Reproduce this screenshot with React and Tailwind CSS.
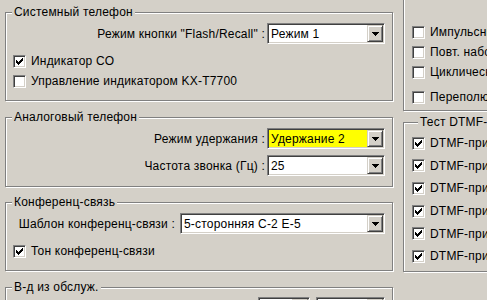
import React from 'react'

const font = { fontFamily: '"Liberation Sans", Arial, sans-serif' }

const Sunken = 'border border-t-[#808080] border-l-[#808080] border-b-white border-r-white shadow-[inset_1px_1px_0_#404040,inset_-1px_-1px_0_#d4d0c8]'

const Check = ({ checked, label }) => (
  <div className="flex items-center gap-[5px] h-full whitespace-nowrap">
    <div className={`w-[13px] h-[13px] shrink-0 bg-white ${Sunken} flex items-center justify-center`}>
      {checked && (
        <svg width="7" height="7" viewBox="0 0 7 7" shapeRendering="crispEdges">
          <path d="M6 0h1v3h-1zM5 1h1v3h-1zM4 2h1v3h-1zM3 3h1v3h-1zM2 4h1v3h-1zM1 3h1v3h-1zM0 2h1v3h-1z" fill="#000" />
        </svg>
      )}
    </div>
    <span>{label}</span>
  </div>
)

const Combo = ({ value, width, highlight }) => (
  <div className={`h-[21px] shrink-0 flex bg-white ${Sunken} p-[1px]`} style={{ width }}>
    <div className={`flex-1 flex items-center pl-[2px] overflow-hidden whitespace-nowrap ${highlight ? 'bg-[#ffff00]' : ''}`}>
      {value}
    </div>
    <div className="w-[16px] h-[17px] bg-[#d4d0c8] border border-t-[#d4d0c8] border-l-[#d4d0c8] border-b-[#404040] border-r-[#404040] shadow-[inset_1px_1px_0_#fff,inset_-1px_-1px_0_#808080] flex items-center justify-center">
      <svg width="7" height="4" viewBox="0 0 7 4" shapeRendering="crispEdges">
        <path d="M0 0h7v1h-7zM1 1h5v1h-5zM2 2h3v1h-3zM3 3h1v1h-1z" fill="#000" />
      </svg>
    </div>
  </div>
)

const Group = ({ title, className = '', children }) => (
  <div className={`shrink-0 flex flex-col border border-[#808080] shadow-[inset_1px_1px_0_#fff,1px_1px_0_#fff] ${className}`}>
    <div className="-mt-[8px] ml-[6px] px-[2px] self-start bg-[#d4d0c8] leading-[14px] h-[14px] whitespace-nowrap">
      {title}
    </div>
    {children}
  </div>
)

const LabelRow = ({ label, className = '', children }) => (
  <div className={`flex items-center justify-end gap-[2px] pr-[7px] h-[21px] whitespace-nowrap ${className}`}>
    <span>{label}</span>
    {children}
  </div>
)

export default function App() {
  return (
    <div className="w-[487px] h-[300px] overflow-hidden bg-[#d4d0c8] text-[12px] tracking-[0.2px] text-black flex gap-[10px] pl-[5px]" style={font}>
      <div className="w-[388px] shrink-0 flex flex-col pt-[12px]">
        <Group title="Системный телефон" className="h-[89px]">
          <LabelRow label={'Режим кнопки "Flash/Recall" :'} className="mt-[4px]">
            <Combo value="Режим 1" width={118} />
          </LabelRow>
          <div className="pl-[7px] h-[20px] mt-[7px]">
            <Check checked label="Индикатор CO" />
          </div>
          <div className="pl-[7px] h-[20px]">
            <Check label="Управление индикатором KX-T7700" />
          </div>
        </Group>

        <Group title="Аналоговый телефон" className="h-[70px] mt-[16px]">
          <LabelRow label="Режим удержания :" className="mt-[4px]">
            <Combo value="Удержание 2" width={118} highlight />
          </LabelRow>
          <LabelRow label="Частота звонка (Гц) :" className="mt-[6px]">
            <Combo value="25" width={118} />
          </LabelRow>
        </Group>

        <Group title="Конференц-связь" className="h-[69px] mt-[15px]">
          <div className="flex items-center justify-end gap-[5px] pr-[7px] h-[21px] mt-[4px] whitespace-nowrap">
            <span>Шаблон конференц-связи :</span>
            <Combo value="5-сторонняя С-2 Е-5" width={205} />
          </div>
          <div className="pl-[7px] h-[20px] mt-[7px]">
            <Check checked label="Тон конференц-связи" />
          </div>
        </Group>

        <Group title="В-д из обслуж." className="h-[40px] mt-[16px]">
          <div className="flex justify-end gap-[6px] pr-[7px] mt-[3px]">
            <Combo value="" width={52} />
            <Combo value="" width={69} />
          </div>
        </Group>
      </div>

      <div className="w-[100px] shrink-0 flex flex-col">
        <div className="shrink-0 h-[111px] border border-t-0 border-[#808080] shadow-[inset_1px_0_0_#fff,1px_1px_0_#fff] pl-[8px] pt-[22px] flex flex-col">
          <div className="h-[20px]"><Check label="Импульсный набор" /></div>
          <div className="h-[20px]"><Check label="Повт. набор" /></div>
          <div className="h-[20px]"><Check label="Циклический" /></div>
          <div className="h-[20px] mt-[5px]"><Check label="Переполюсовка" /></div>
        </div>

        <Group title="Тест DTMF-приёмника" className="h-[150px] mt-[11px] pl-[8px]">
          <div className="mt-[3px] flex flex-col">
            {[0, 1, 2, 3, 4, 5].map((i) => (
              <div key={i} className="h-[22.6px]">
                <Check checked label={`DTMF-приёмник ${i + 1}`} />
              </div>
            ))}
          </div>
        </Group>
      </div>
    </div>
  )
}
